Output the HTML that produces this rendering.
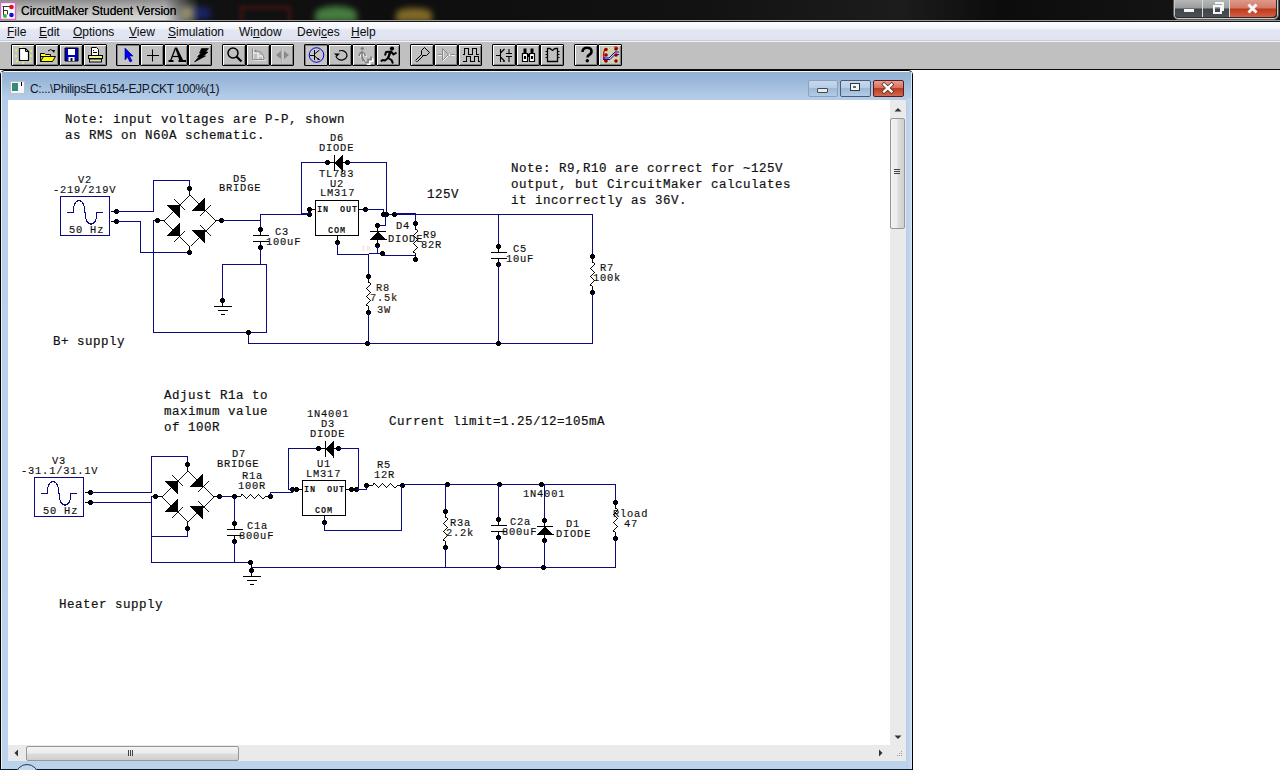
<!DOCTYPE html>
<html><head><meta charset="utf-8">
<style>
html,body{margin:0;padding:0;}
body{width:1280px;height:770px;overflow:hidden;position:relative;background:#fff;font-family:"Liberation Sans",sans-serif;}
.a{position:absolute;}
#title{left:0;top:0;width:1280px;height:20px;background:linear-gradient(90deg,#151515 0,#0e0e0e 400px,#121212 700px,#1c1c1c 900px,#0c0c0c 1000px,#181818 1280px);}
#title .t{left:21px;top:4px;font-size:12px;color:#000;white-space:nowrap;text-shadow:0 0 0.4px rgba(0,0,0,.7);}
#menu{left:0;top:22px;width:1280px;height:18px;background:linear-gradient(180deg,#fbfcfe 0px,#f3f5fb 6px,#e3e7f3 8px,#dfe3f1 18px);}
#menu span{position:absolute;top:3px;font-size:12px;color:#0c0c0c;white-space:nowrap;}
#menu u{text-decoration:underline;text-underline-offset:1px;text-decoration-thickness:1px;}
#toolbar{left:0;top:42px;width:1280px;height:28px;background:#c0c0c0;}
.btn{position:absolute;top:44px;width:24px;height:22px;box-sizing:border-box;border:1px solid #000;border-radius:1px;background:#c0c0c0;box-shadow:inset 1px 1px 0 #fff,inset -1px -1px 0 #808080;}
.btn.p{background:#c6c6c6;box-shadow:inset 1px 1px 0 #808080;}
.btn svg{position:absolute;left:1px;top:0px;}
</style></head><body>
<div id="title" class="a"><div class="a" style="left:0;top:0;width:205px;height:20px;background:linear-gradient(180deg,#8c8c8c 0,#b4b4b4 8px,#cfcfcf 16px,#d8d8d8 20px);-webkit-mask-image:linear-gradient(90deg,#000 0,#000 165px,transparent 200px);"></div><svg class="a" style="left:0;top:2px" width="17" height="18" viewBox="0 0 17 18"><rect x="0.5" y="0.5" width="15" height="17" fill="#fff" stroke="#d070c8" stroke-width="1.5"/><path d="M2.5 4.5h8M3.5 4.5v10M3.5 8.5h4v4" fill="none" stroke="#333" stroke-width="1"/><circle cx="11.5" cy="5" r="2.3" fill="#e01010"/><circle cx="11.5" cy="13" r="2.3" fill="#1010d0"/><circle cx="5" cy="14" r="2" fill="#30c030"/></svg>
<div class="a" style="left:182px;top:7px;width:14px;height:12px;background:#c8c080;filter:blur(3px);opacity:.55"></div>
<div class="a" style="left:194px;top:7px;width:16px;height:12px;background:#2030a0;filter:blur(3px);opacity:.6"></div>
<div class="a" style="left:240px;top:6px;width:45px;height:14px;border:3px solid #6a1a14;filter:blur(2px);opacity:.6"></div>
<div class="a" style="left:315px;top:6px;width:42px;height:16px;background:#58a050;border-radius:50% 50% 0 0;filter:blur(3px);opacity:.75"></div>
<div class="a" style="left:396px;top:8px;width:36px;height:14px;background:#b09030;border-radius:40% 40% 0 0;filter:blur(3px);opacity:.7"></div>
<div class="t a">CircuitMaker Student Version</div></div>
<div class="a" style="left:1173px;top:-3px;width:104px;height:21px;border:1px solid #5a5a5a;border-radius:0 0 5px 5px;background:#2a2a2a;box-shadow:inset 0 0 0 1px #c8c8c8;"></div>
<div class="a" style="left:1175px;top:0;width:27px;height:17px;background:linear-gradient(180deg,#b8b8b8 0,#9a9a9a 8px,#404548 9px,#4a5054 17px);border-radius:0 0 0 4px;"></div>
<div class="a" style="left:1203px;top:0;width:26px;height:17px;background:linear-gradient(180deg,#b4b8b8 0,#9aa0a0 8px,#404548 9px,#4a5054 17px);"></div>
<div class="a" style="left:1230px;top:0;width:46px;height:17px;background:linear-gradient(180deg,#e09888 0,#d07a68 8px,#c03818 9px,#d06048 17px);border-radius:0 0 4px 0;"></div>
<div class="a" style="left:1202px;top:0;width:1px;height:17px;background:#d8d8d8"></div>
<div class="a" style="left:1229px;top:0;width:1px;height:17px;background:#d8d8d8"></div>
<div class="a" style="left:1184px;top:9px;width:10px;height:3px;background:#f4f4f4;"></div>
<div class="a" style="left:1213px;top:5px;width:5px;height:5px;border:2px solid #f4f4f4;"></div>
<div class="a" style="left:1215px;top:2px;width:7px;height:7px;border-top:2px solid #f4f4f4;border-right:2px solid #f4f4f4;"></div>
<svg class="a" style="left:1245px;top:2px" width="16" height="13" viewBox="0 0 16 13"><path d="M3.5 2.5 L11.5 10.5 M11.5 2.5 L3.5 10.5" stroke="#f6f6f6" stroke-width="3" stroke-linecap="butt"/></svg>
<div class="a" style="left:0;top:20px;width:1280px;height:1px;background:#9a9a9a"></div>
<div class="a" style="left:0;top:21px;width:1280px;height:1px;background:#151515"></div>
<div id="menu" class="a">
<span style="left:7px"><u>F</u>ile</span>
<span style="left:39px"><u>E</u>dit</span>
<span style="left:73px"><u>O</u>ptions</span>
<span style="left:129px"><u>V</u>iew</span>
<span style="left:168px"><u>S</u>imulation</span>
<span style="left:239px">Wi<u>n</u>dow</span>
<span style="left:297px">Devi<u>c</u>es</span>
<span style="left:351px"><u>H</u>elp</span>
</div>
<div class="a" style="left:0;top:40px;width:1280px;height:1px;background:#c9ccd6"></div>
<div class="a" style="left:0;top:41px;width:1280px;height:1px;background:#f4f4f4"></div>
<div id="toolbar" class="a"></div>
<div class="a" style="left:0;top:69px;width:1280px;height:1px;background:#0a0a0a"></div>
<div class="btn" style="left:11px"><svg width="21" height="20" viewBox="0 0 21 20">
<g fill="#e8f070" opacity="0.8"><circle cx="3" cy="5" r="1.2"/><circle cx="3" cy="11" r="1.2"/><circle cx="4" cy="16" r="1.2"/><circle cx="18" cy="6" r="1.2"/><circle cx="18" cy="11" r="1.2"/><circle cx="17" cy="16" r="1.2"/><circle cx="10" cy="18" r="1.2"/><circle cx="8" cy="2" r="1.2"/></g>
<path d="M6.5 3.5h6l3 3v9h-9z" fill="#fff" stroke="#000" stroke-width="1.2"/><path d="M12.5 3.5v3h3" fill="none" stroke="#000"/></svg></div>
<div class="btn" style="left:35px"><svg width="21" height="20" viewBox="0 0 21 20">
<path d="M11 6 q3-3 5 0" fill="none" stroke="#000" stroke-width="1"/><path d="M15 5l3 0-1 3z" fill="#000"/>
<path d="M3.5 8.5h4l1 1h5v2h-10z" fill="#ffff40" stroke="#000"/><path d="M3.5 16.5l3-5h12l-3 5z" fill="#ffff00" stroke="#000"/><path d="M3.5 8.5v8" stroke="#000"/></svg></div>
<div class="btn" style="left:59px"><svg width="21" height="20" viewBox="0 0 21 20">
<path d="M4 3h13v13H4z" fill="#0000c0" stroke="#000" stroke-width="1"/><rect x="7" y="4" width="7" height="6" fill="#fff"/><rect x="7.5" y="12" width="6" height="4" fill="#fff"/><rect x="9.5" y="13" width="2" height="3" fill="#000"/></svg></div>
<div class="btn" style="left:83px"><svg width="21" height="20" viewBox="0 0 21 20">
<path d="M6.5 2.5h5l2 2v6h-7z" fill="#fff" stroke="#000"/><rect x="8" y="5" width="1" height="1" fill="#000"/><rect x="8" y="7" width="4" height="1" fill="#000"/>
<rect x="3.5" y="10.5" width="14" height="3" fill="#f0f090" stroke="#000"/><rect x="4.5" y="14" width="12" height="3" fill="#e0e0c0" stroke="#000"/></svg></div>

<div class="btn p" style="left:116px"><svg width="21" height="20" viewBox="0 0 21 20"><path d="M7 3l8 8h-3.5l2.5 5-2 1-2.5-5-2.5 3z" fill="#0000ff" stroke="#000080" stroke-width="0.6"/></svg></div>
<div class="btn" style="left:140px"><svg width="21" height="20" viewBox="0 0 21 20"><path d="M5 10.5h12M10.5 4.5v12" stroke="#000" stroke-width="1"/></svg></div>
<div class="btn" style="left:164px"><svg width="22" height="20" viewBox="0 0 22 20"><path d="M4.5 16 L9.5 3" stroke="#000" stroke-width="1.3" fill="none"/><path d="M9 2.5 L11 2.5 L17.5 16 L13.5 16z" fill="#000"/><path d="M7 11.5 H14" stroke="#000" stroke-width="1.2"/><rect x="2.5" y="15" width="5" height="2" fill="#000"/><rect x="12.5" y="15" width="7.5" height="2" fill="#000"/></svg></div>
<div class="btn" style="left:188px"><svg width="22" height="20" viewBox="0 0 22 20"><path d="M11.5 3.5 L18.5 3.5 L15.5 7 L18 7 L13.5 11 L15.5 11 L4.5 17 L9 11.5 L7.5 11.5 L11 8 L9.5 8z" fill="#000" stroke="#000" stroke-width="0.6"/></svg></div>

<div class="btn" style="left:222px"><svg width="21" height="20" viewBox="0 0 21 20"><circle cx="9" cy="8" r="5" fill="none" stroke="#000" stroke-width="1.5"/><path d="M12.5 11.5l5 5" stroke="#000" stroke-width="2.2"/></svg></div>
<div class="btn" style="left:246px"><svg width="21" height="20" viewBox="0 0 21 20"><path d="M5 4v11h13M5 8h5v7M10 11h5v4" fill="none" stroke="#fff" stroke-width="1"/><path d="M4.5 3.5v11h12M9 6q6 0 7 8" fill="none" stroke="#8a8a8a" stroke-width="1"/><path d="M8 4l-2 2.5 3 1z" fill="#8a8a8a"/></svg></div>
<div class="btn" style="left:270px"><svg width="21" height="20" viewBox="0 0 21 20"><path d="M9 6v8l-5-4z" fill="#8a8a8a"/><path d="M12 6v8l5-4z" fill="#8a8a8a"/><path d="M10.5 3v15" stroke="#fff" stroke-width="1"/><path d="M10 3v15" stroke="#8a8a8a" stroke-width="0.8"/></svg></div>

<div class="btn p" style="left:304px"><svg width="21" height="20" viewBox="0 0 21 20"><circle cx="10.5" cy="10" r="7.3" fill="none" stroke="#0000e0" stroke-width="1"/><path d="M4 10.5h5M8.5 5v10M8.5 9l5-4M8.5 11l5 4" fill="none" stroke="#000" stroke-width="1"/><path d="M14 15l-3-0.5 1.5-1.5z" fill="#000"/></svg></div>
<div class="btn" style="left:328px"><svg width="21" height="20" viewBox="0 0 21 20"><path d="M9 6 a5.5 4.8 0 1 1 -3 5" fill="none" stroke="#000" stroke-width="1.2"/><path d="M4 8.5l6 0-3 3z" fill="#000"/></svg></div>
<div class="btn" style="left:352px"><svg width="22" height="20" viewBox="0 0 22 20"><g transform="translate(0.8,0.8)" fill="none" stroke="#fff" stroke-width="1.6"><path d="M8 6 L8 11 L9 16 M8 11 L10 15.5 L11 17 M8 6.5 L6 8.5 L5 11 M8 6.5 L10.5 8.5 L11.5 11"/><path d="M12 18.5 H15 V15.5 H18 V12.5"/></g><circle cx="8.3" cy="3.6" r="1.7" fill="#808080"/><g fill="none" stroke="#808080" stroke-width="1.6"><path d="M8 6 L8 11 L9 16 M8 11 L10 15.5 L11 17 M8 6.5 L6 8.5 L5 11 M8 6.5 L10.5 8.5 L11.5 11"/><path d="M11 17.5 H14 V14.5 H17 V11.5"/></g></svg></div>
<div class="btn" style="left:376px"><svg width="22" height="20" viewBox="0 0 22 20"><circle cx="14" cy="3.6" r="2.1" fill="#000"/><path d="M12.5 6.5 L10 13 M7 10.5 L8 7 L13 6.5 L15.5 9.5 L18.5 7.5 M10 13 L7 15.5 L4.5 15 L3 16.5 M10 13 L13.5 15 L15 18.5" fill="none" stroke="#000" stroke-width="2" stroke-linejoin="round"/><path d="M11 7 L13.5 7 L11.5 12.5 L9.5 12z" fill="#000"/></svg></div>

<div class="btn" style="left:410px"><svg width="21" height="20" viewBox="0 0 21 20"><path d="M12.5 2.5l5 5-3 3h-4l-1-1v-4z" fill="none" stroke="#000" stroke-width="1"/><path d="M9.5 9.5l-6 6 1.5 1.5 6-6" fill="none" stroke="#000" stroke-width="1"/><path d="M4 15.5l1 1" stroke="#fff"/></svg></div>
<div class="btn" style="left:434px"><svg width="21" height="20" viewBox="0 0 21 20"><path d="M2 9.5h5M14 9.5h5" stroke="#8a8a8a" stroke-width="1.2"/><path d="M2 10.5h5M14 10.5h5" stroke="#fff" stroke-width="0.8"/><path d="M7 4l6 6-6 6z" fill="none" stroke="#fff" stroke-width="1"/><path d="M6.5 3.5l6 6-6 6z" fill="none" stroke="#8a8a8a" stroke-width="1"/><circle cx="13.5" cy="10" r="1.3" fill="#fff" stroke="#8a8a8a" stroke-width="0.6"/></svg></div>
<div class="btn" style="left:458px"><svg width="21" height="20" viewBox="0 0 21 20"><path d="M2.5 9.5h2v-6h4v6h4v-6h4v6h2" fill="none" stroke="#000" stroke-width="1" shape-rendering="crispEdges"/><path d="M2.5 16.5h4v-5h4v5h4v-5h4v5h1" fill="none" stroke="#000" stroke-width="1" shape-rendering="crispEdges"/></svg></div>

<div class="btn" style="left:492px"><svg width="21" height="20" viewBox="0 0 21 20"><path d="M2 10.5h4M6.5 4v13M6.5 8l4-4M6.5 12l4 4" fill="none" stroke="#000" stroke-width="1.1"/><path d="M11 17l-2.5-.5 1.5-1.5z" fill="#000"/><path d="M12 8.5h6M12 11.5h6M15 4v4M15 12v5" stroke="#000" stroke-width="1.1"/></svg></div>
<div class="btn" style="left:516px"><svg width="21" height="20" viewBox="0 0 21 20"><path d="M4.5 8.5h5v8h-5zM11.5 8.5h5v8h-5z" fill="#fff" stroke="#000" stroke-width="1.2"/><path d="M5.5 3.5h3v5h-3zM12.5 3.5h3v5h-3z" fill="#000"/><rect x="9" y="9" width="3" height="3" fill="#000"/><rect x="6" y="11" width="2" height="3" fill="#000"/><rect x="13" y="11" width="2" height="3" fill="#000"/></svg></div>
<div class="btn" style="left:540px"><svg width="21" height="20" viewBox="0 0 21 20"><path d="M5.5 3.5h2.5l2.5 2 2.5-2h2.5v13h-10z" fill="none" stroke="#000" stroke-width="1.3"/><g fill="#000"><rect x="3.5" y="6" width="2" height="1"/><rect x="3.5" y="9" width="2" height="1"/><rect x="3.5" y="12" width="2" height="1"/><rect x="15.5" y="6" width="2" height="1"/><rect x="15.5" y="9" width="2" height="1"/><rect x="15.5" y="12" width="2" height="1"/></g></svg></div>

<div class="btn" style="left:574px"><svg width="21" height="20" viewBox="0 0 21 20"><path d="M6.5 7 Q6.5 2.8 11 2.8 Q15.5 2.8 15.5 6.5 Q15.5 8.8 13 10 Q11.5 10.8 11.5 12.5" fill="none" stroke="#000" stroke-width="2.6"/><circle cx="11.3" cy="15.8" r="1.7" fill="#000"/></svg></div>
<div class="btn" style="left:598px"><svg width="21" height="20" viewBox="0 0 21 20"><rect x="2" y="2" width="17" height="16" fill="#e8e890" opacity="0.5"/><path d="M5 16q-3-6 0-12" fill="none" stroke="#e00000" stroke-width="1.3"/><path d="M3 13h6l6-6h4M3 14.5h7l5-5h4" fill="none" stroke="#0000e0" stroke-width="1"/><g fill="#900000"><circle cx="6" cy="4.5" r="1.8"/><circle cx="6" cy="10" r="1.8"/><circle cx="6" cy="16" r="1.8"/><circle cx="16" cy="4" r="1.8"/><circle cx="16" cy="10" r="1.8"/><circle cx="16" cy="16" r="1.8"/></g><path d="M14 2h3l1 2" fill="none" stroke="#e00000" stroke-width="1"/></svg></div>

<div class="a" style="left:0;top:70px;width:913px;height:700px;background:#000;border-radius:5px 5px 0 0;"></div>
<div class="a" style="left:1px;top:71px;width:911px;height:698px;background:linear-gradient(180deg,#f4f8fc 0px,#f4f8fc 1px,#93b2d3 1px,#9cb8d8 10px,#b2cce8 26px,#b8d0ea 60px,#bcd3ec 100%);border-radius:4px 4px 0 0;"></div>
<div class="a" style="left:1px;top:72px;width:1px;height:697px;background:#e8f0f8"></div>
<div class="a" style="left:911px;top:72px;width:1px;height:697px;background:#d8e6f4"></div>
<div class="a" style="left:906px;top:98px;width:5px;height:671px;background:linear-gradient(90deg,#b8cfe8,#c4d9ee)"></div>
<!-- icon -->
<div class="a" style="left:10px;top:81px;width:13px;height:11px;background:#f4f6f8;border:1px solid #b8c0c8;"></div>
<div class="a" style="left:12px;top:83px;width:6px;height:8px;background:#3a8a7a;"></div>
<div class="a" style="left:21px;top:82px;width:1px;height:4px;background:#000;"></div>
<div class="a" style="left:30px;top:82px;font-size:12px;letter-spacing:-0.38px;color:#10182a;white-space:nowrap;">C:...\PhilipsEL6154-EJP.CKT 100%(1)</div>
<!-- buttons -->
<div class="a" style="left:808px;top:80px;width:28px;height:15px;border:1px solid #8aa2c0;border-radius:2px;background:linear-gradient(180deg,#c6d8ec 0%,#b8cde6 45%,#9fb9d6 50%,#b4cbe4 100%);"></div>
<div class="a" style="left:817px;top:88px;width:9px;height:3px;border:1px solid #404850;background:#e8ecf0;border-radius:1px"></div>
<div class="a" style="left:840px;top:80px;width:29px;height:15px;border:1px solid #4a5a70;border-radius:2px;background:linear-gradient(180deg,#c6d8ec 0%,#b8cde6 45%,#9fb9d6 50%,#b4cbe4 100%);"></div>
<div class="a" style="left:850px;top:83px;width:8px;height:6px;border:1.5px solid #303840;background:#f4f6f8;"></div>
<div class="a" style="left:853px;top:86px;width:3px;height:2px;background:#606870;"></div>
<div class="a" style="left:873px;top:80px;width:29px;height:15px;border:1px solid #5a1a1a;border-radius:2px;background:linear-gradient(180deg,#e8a090 0%,#d87060 45%,#c03a20 50%,#d06a50 100%);"></div>
<svg class="a" style="left:880px;top:82px" width="16" height="12" viewBox="0 0 16 12"><path d="M4 2.5 L11.5 9.5 M11.5 2.5 L4 9.5" stroke="#4a2020" stroke-width="3.8" stroke-linecap="square"/><path d="M4 2.5 L11.5 9.5 M11.5 2.5 L4 9.5" stroke="#fff" stroke-width="2.4" stroke-linecap="square"/></svg>
<!-- client -->
<div class="a" style="left:8px;top:100px;width:882px;height:645px;background:#fff;overflow:hidden;">
<svg width="882" height="645" style="position:absolute;left:0;top:0">
<style>
.n{font-family:"Liberation Mono",monospace;font-size:12.5px;letter-spacing:0.5px;fill:#111;stroke:#111;stroke-width:0.2px;}
.l{font-family:"Liberation Mono",monospace;font-size:10.4px;font-weight:normal;letter-spacing:0.8px;stroke:currentColor;stroke-width:0.15px;}
.s{font-family:"Liberation Mono",monospace;font-size:8.5px;font-weight:bold;letter-spacing:0.9px;fill:#141414;}
</style>
<g transform="translate(-8,-100)" shape-rendering="crispEdges">
<text class="n" x="65" y="122.5">Note: input voltages are P-P, shown</text>
<text class="n" x="65" y="138.5">as RMS on N60A schematic.</text>
<text class="n" x="511" y="171.5">Note: R9,R10 are correct for ~125V</text>
<text class="n" x="511" y="187.5">output, but CircuitMaker calculates</text>
<text class="n" x="511" y="203.5">it incorrectly as 36V.</text>
<text class="n" x="427" y="197.5">125V</text>
<text class="n" x="53" y="344.5">B+ supply</text>
<rect x="60.5" y="196.5" width="49" height="39" stroke="#0c0a80" fill="none"/>
<path d="M67 212.5 H73 C73 196.5 85 196.5 85 212.5 C85 228 97 228 97 212.5 H102.5" stroke="#0c0a80" fill="none" stroke-width="1.1"/>
<text class="l" x="78" y="183" fill="#141414" stroke="#141414">V2</text>
<text class="l" x="53" y="193" fill="#141414" stroke="#141414">-219/219V</text>
<text class="l" x="69" y="233" fill="#141414" stroke="#141414">50 Hz</text>
<path d="M110.5 211.5 L116.5 211.5" stroke="#000" fill="none"/>
<path d="M110.5 221.5 L116.5 221.5" stroke="#000" fill="none"/>
<circle cx="116.5" cy="211.5" r="2.6" fill="#000"/>
<circle cx="116.5" cy="221.5" r="2.6" fill="#000"/>
<path d="M116.5 211.5 L153.5 211.5 L153.5 180.5 L189.5 180.5 L189.5 188.5" stroke="#0c0a80" fill="none"/>
<path d="M116.5 221.5 L140.5 221.5 L140.5 252.5 L189.5 252.5" stroke="#0c0a80" fill="none"/>
<path d="M157.5 220.5 L153.5 220.5 L153.5 332.5 L266.5 332.5 L266.5 264.5 L222.5 264.5 L222.5 300.5" stroke="#0c0a80" fill="none"/>
<path d="M189.5 195 L215 220.5 L189.5 246 L164 220.5 z" stroke="#000" fill="none" stroke-width="0.72"/>
<path d="M189.5 195 L215 220.5 L189.5 246 L164 220.5 z" stroke="#000" fill="none" stroke-width="0.72"/>
<path d="M189.5 188.5 V195 M189.5 252.5 V246 M157.5 220.5 H164 M221.5 220.5 H215" stroke="#000" fill="none"/>
<path d="M179.578 204.922 L179.578 217.649 L166.851 204.922 z" fill="#000"/>
<path d="M185.094 210.437 L174.063 199.406" stroke="#000" stroke-width="0.72"/>
<path d="M185.094 210.437 L174.063 199.406" stroke="#000" stroke-width="0.72"/>
<path d="M205.078 210.578 L192.351 210.578 L205.078 197.851 z" fill="#000"/>
<path d="M199.563 216.094 L210.594 205.063" stroke="#000" stroke-width="0.72"/>
<path d="M199.563 216.094 L210.594 205.063" stroke="#000" stroke-width="0.72"/>
<path d="M179.578 236.078 L166.851 236.078 L179.578 223.351 z" fill="#000"/>
<path d="M174.063 241.594 L185.094 230.563" stroke="#000" stroke-width="0.72"/>
<path d="M174.063 241.594 L185.094 230.563" stroke="#000" stroke-width="0.72"/>
<path d="M205.078 230.422 L205.078 243.149 L192.351 230.422 z" fill="#000"/>
<path d="M210.594 235.937 L199.563 224.906" stroke="#000" stroke-width="0.72"/>
<path d="M210.594 235.937 L199.563 224.906" stroke="#000" stroke-width="0.72"/>
<circle cx="189.5" cy="188.5" r="2.6" fill="#000"/>
<circle cx="189.5" cy="252.5" r="2.6" fill="#000"/>
<circle cx="157.5" cy="220.5" r="2.6" fill="#000"/>
<circle cx="221.5" cy="220.5" r="2.6" fill="#000"/>
<text class="l" x="233" y="182" fill="#141414" stroke="#141414">D5</text>
<text class="l" x="219" y="191" fill="#141414" stroke="#141414">BRIDGE</text>
<path d="M221.5 220.5 L260.5 220.5 L260.5 214.5 L301.5 214.5 L309.5 214.5" stroke="#0c0a80" fill="none"/>
<path d="M260.5 220.5 L260.5 229.5" stroke="#0c0a80" fill="none"/>
<path d="M260.5 229.5 L260.5 235.5" stroke="#000" fill="none"/>
<path d="M260.5 241.5 L260.5 247.5" stroke="#000" fill="none"/>
<path d="M252.5 235.5 L268.5 235.5" stroke="#000" fill="none"/>
<path d="M252.5 241.5 L268.5 241.5" stroke="#000" fill="none"/>
<circle cx="260.5" cy="229.5" r="2.6" fill="#000"/>
<circle cx="260.5" cy="247.5" r="2.6" fill="#000"/>
<path d="M260.5 247.5 L260.5 264.5" stroke="#0c0a80" fill="none"/>
<text class="l" x="275" y="235" fill="#141414" stroke="#141414">C3</text>
<text class="l" x="266" y="245" fill="#141414" stroke="#141414">100uF</text>
<circle cx="222.5" cy="300.5" r="2.6" fill="#000"/>
<path d="M222.5 300.5 L222.5 306.5" stroke="#000" fill="none"/>
<path d="M213.5 306.5 L231.5 306.5" stroke="#000" fill="none"/>
<path d="M217.5 310.5 L227.5 310.5" stroke="#000" fill="none"/>
<path d="M220.5 314.5 L224.5 314.5" stroke="#000" fill="none"/>
<path d="M248.5 332.5 L248.5 343.5 L592.5 343.5" stroke="#0c0a80" fill="none"/>
<circle cx="248.5" cy="332.5" r="2.6" fill="#000"/>
<rect x="315.5" y="200.5" width="43" height="35" stroke="#000" fill="none"/>
<text class="s" x="317" y="212">IN</text>
<text class="s" x="340" y="212">OUT</text>
<text class="s" x="328" y="233">COM</text>
<text class="s" x="361" y="251" style="fill:#f0c0b0;opacity:.45;font-size:7.5px">IN</text>
<path d="M309.5 209.5 L315.5 209.5" stroke="#000" fill="none"/>
<circle cx="309.5" cy="209.5" r="2.6" fill="#000"/>
<circle cx="309.5" cy="214.5" r="2.6" fill="#000"/>
<path d="M358.5 209.5 L365.5 209.5" stroke="#000" fill="none"/>
<circle cx="365.5" cy="209.5" r="2.6" fill="#000"/>
<path d="M337.5 235.5 L337.5 242.5" stroke="#000" fill="none"/>
<circle cx="337.5" cy="242.5" r="2.6" fill="#000"/>
<text class="l" x="319" y="177" fill="#141414" stroke="#141414">TL783</text>
<text class="l" x="330" y="187" fill="#141414" stroke="#141414">U2</text>
<text class="l" x="320" y="196" fill="#141414" stroke="#141414">LM317</text>
<path d="M301.5 214.5 L301.5 162.5 L327.5 162.5" stroke="#0c0a80" fill="none"/>
<path d="M327.5 162.5 L347.5 162.5" stroke="#000" fill="none"/>
<path d="M334.5 154.5 L334.5 170.5" stroke="#000" fill="none"/>
<path d="M334.5 162.5 L342.5 154.5 L342.5 171.5 z" fill="#000"/>
<circle cx="327.5" cy="162.5" r="2.6" fill="#000"/>
<circle cx="347.5" cy="162.5" r="2.6" fill="#000"/>
<text class="l" x="330" y="141" fill="#141414" stroke="#141414">D6</text>
<text class="l" x="319" y="151" fill="#141414" stroke="#141414">DIODE</text>
<path d="M347.5 162.5 L386.5 162.5 L386.5 214.5" stroke="#0c0a80" fill="none"/>
<path d="M365.5 209.5 L383.5 209.5 L383.5 214.5" stroke="#0c0a80" fill="none"/>
<path d="M383.5 214.5 L592.5 214.5 L592.5 256.5" stroke="#0c0a80" fill="none"/>
<circle cx="383.5" cy="214.5" r="2.6" fill="#000"/>
<circle cx="386.5" cy="214.5" r="2.6" fill="#000"/>
<circle cx="394.5" cy="214.5" r="2.6" fill="#000"/>
<path d="M385.5 214.5 L385.5 225.5 L377.5 225.5" stroke="#0c0a80" fill="none"/>
<path d="M394.5 213.5 L415.5 213.5" stroke="#0c0a80" fill="none"/>
<path d="M301.5 213.5 L309.5 213.5" stroke="#0c0a80" fill="none"/>
<path d="M377.5 225.5 L377.5 245.5" stroke="#000" fill="none"/>
<path d="M369.5 231.5 L385.5 231.5" stroke="#000" fill="none"/>
<path d="M377.5 231.5 L369.5 239.5 L386.5 239.5 z" fill="#000"/>
<circle cx="377.5" cy="225.5" r="2.6" fill="#000"/>
<circle cx="377.5" cy="245.5" r="2.6" fill="#000"/>
<text class="l" x="396" y="229" fill="#141414" stroke="#141414">D4</text>
<text class="l" x="388" y="242" fill="#141414" stroke="#141414">DIODE</text>
<path d="M377.5 245.5 L377.5 253.5" stroke="#0c0a80" fill="none"/>
<path d="M337.5 242.5 L337.5 254.5 L368.5 254.5" stroke="#0c0a80" fill="none"/>
<path d="M368.5 253.5 L382.5 253.5" stroke="#0c0a80" fill="none"/>
<path d="M382.5 255.5 L415.5 255.5 L415.5 259.5" stroke="#0c0a80" fill="none"/>
<circle cx="382.5" cy="253.5" r="2.6" fill="#000"/>
<path d="M415.5 214.5 L415.5 223.5" stroke="#0c0a80" fill="none"/>
<circle cx="415.5" cy="223.5" r="2.6" fill="#000"/>
<circle cx="415.5" cy="259.5" r="2.6" fill="#000"/>
<path d="M415.5 223.5 L415.5 229.5 L417.9 231.2 L413.1 235.5 L417.9 239.5 L413.1 243.5 L417.9 247.5 L413.1 251.8 L415.5 253.5 L415.5 259.5" stroke="#000" fill="none" stroke-width="0.8"/>
<path d="M415.5 223.5 L415.5 229.5 L417.9 231.2 L413.1 235.5 L417.9 239.5 L413.1 243.5 L417.9 247.5 L413.1 251.8 L415.5 253.5 L415.5 259.5" stroke="#000" fill="none" stroke-width="0.8"/>
<text class="l" x="423" y="238" fill="#141414" stroke="#141414">R9</text>
<text class="l" x="421" y="248" fill="#141414" stroke="#141414">82R</text>
<path d="M368.5 253.5 L368.5 276.5" stroke="#0c0a80" fill="none"/>
<circle cx="368.5" cy="276.5" r="2.6" fill="#000"/>
<circle cx="368.5" cy="312.5" r="2.6" fill="#000"/>
<path d="M368.5 276.5 L368.5 282.5 L370.9 284.2 L366.1 288.5 L370.9 292.5 L366.1 296.5 L370.9 300.5 L366.1 304.8 L368.5 306.5 L368.5 312.5" stroke="#000" fill="none" stroke-width="0.8"/>
<path d="M368.5 276.5 L368.5 282.5 L370.9 284.2 L366.1 288.5 L370.9 292.5 L366.1 296.5 L370.9 300.5 L366.1 304.8 L368.5 306.5 L368.5 312.5" stroke="#000" fill="none" stroke-width="0.8"/>
<path d="M368.5 312.5 L368.5 343.5" stroke="#0c0a80" fill="none"/>
<circle cx="367.5" cy="343.5" r="2.6" fill="#000"/>
<text class="l" x="376" y="291" fill="#3a1e10" stroke="#3a1e10">R8</text>
<text class="l" x="370" y="301" fill="#3a1e10" stroke="#3a1e10">7.5k</text>
<text class="l" x="377" y="313" fill="#3a1e10" stroke="#3a1e10">3W</text>
<path d="M498.5 214.5 L498.5 246.5" stroke="#0c0a80" fill="none"/>
<path d="M498.5 246.5 L498.5 252.5" stroke="#000" fill="none"/>
<path d="M498.5 258.5 L498.5 264.5" stroke="#000" fill="none"/>
<path d="M490.5 252.5 L506.5 252.5" stroke="#000" fill="none"/>
<path d="M490.5 258.5 L506.5 258.5" stroke="#000" fill="none"/>
<circle cx="498.5" cy="246.5" r="2.6" fill="#000"/>
<circle cx="498.5" cy="264.5" r="2.6" fill="#000"/>
<path d="M498.5 264.5 L498.5 343.5" stroke="#0c0a80" fill="none"/>
<circle cx="498.5" cy="343.5" r="2.6" fill="#000"/>
<text class="l" x="513" y="252" fill="#141414" stroke="#141414">C5</text>
<text class="l" x="506" y="262" fill="#141414" stroke="#141414">10uF</text>
<circle cx="592.5" cy="256.5" r="2.6" fill="#000"/>
<circle cx="592.5" cy="292.5" r="2.6" fill="#000"/>
<path d="M592.5 256.5 L592.5 262.5 L594.9 264.2 L590.1 268.5 L594.9 272.5 L590.1 276.5 L594.9 280.5 L590.1 284.8 L592.5 286.5 L592.5 292.5" stroke="#000" fill="none" stroke-width="0.8"/>
<path d="M592.5 256.5 L592.5 262.5 L594.9 264.2 L590.1 268.5 L594.9 272.5 L590.1 276.5 L594.9 280.5 L590.1 284.8 L592.5 286.5 L592.5 292.5" stroke="#000" fill="none" stroke-width="0.8"/>
<path d="M592.5 292.5 L592.5 343.5" stroke="#0c0a80" fill="none"/>
<text class="l" x="600" y="271" fill="#141414" stroke="#141414">R7</text>
<text class="l" x="593" y="281" fill="#141414" stroke="#141414">100k</text>
<text class="n" x="164" y="398.5">Adjust R1a to</text>
<text class="n" x="164" y="414.5">maximum value</text>
<text class="n" x="164" y="430.5">of 100R</text>
<text class="n" x="389" y="424.5">Current limit=1.25/12=105mA</text>
<text class="n" x="59" y="607.5">Heater supply</text>
<rect x="34.5" y="477.5" width="49" height="39" stroke="#0c0a80" fill="none"/>
<path d="M41 493.5 H47 C47 477.5 59 477.5 59 493.5 C59 509 71 509 71 493.5 H76.5" stroke="#0c0a80" fill="none" stroke-width="1.1"/>
<text class="l" x="52" y="464" fill="#141414" stroke="#141414">V3</text>
<text class="l" x="21" y="474" fill="#141414" stroke="#141414">-31.1/31.1V</text>
<text class="l" x="43" y="514" fill="#141414" stroke="#141414">50 Hz</text>
<path d="M84.5 492.5 L90.5 492.5" stroke="#000" fill="none"/>
<path d="M84.5 502.5 L90.5 502.5" stroke="#000" fill="none"/>
<circle cx="90.5" cy="492.5" r="2.6" fill="#000"/>
<circle cx="90.5" cy="502.5" r="2.6" fill="#000"/>
<path d="M90.5 492.5 L151.5 492.5 L151.5 456.5 L187.5 456.5 L187.5 464.5" stroke="#0c0a80" fill="none"/>
<path d="M90.5 502.5 L151.5 502.5" stroke="#0c0a80" fill="none"/>
<path d="M155.5 496.5 L151.5 496.5 L151.5 562.5 L250.5 562.5" stroke="#0c0a80" fill="none"/>
<path d="M187.5 528.5 L187.5 536.5 L151.5 536.5" stroke="#0c0a80" fill="none"/>
<path d="M187.5 471 L213 496.5 L187.5 522 L162 496.5 z" stroke="#000" fill="none" stroke-width="0.72"/>
<path d="M187.5 471 L213 496.5 L187.5 522 L162 496.5 z" stroke="#000" fill="none" stroke-width="0.72"/>
<path d="M187.5 464.5 V471 M187.5 528.5 V522 M155.5 496.5 H162 M219.5 496.5 H213" stroke="#000" fill="none"/>
<path d="M177.578 480.922 L177.578 493.649 L164.851 480.922 z" fill="#000"/>
<path d="M183.094 486.437 L172.063 475.406" stroke="#000" stroke-width="0.72"/>
<path d="M183.094 486.437 L172.063 475.406" stroke="#000" stroke-width="0.72"/>
<path d="M203.078 486.578 L190.351 486.578 L203.078 473.851 z" fill="#000"/>
<path d="M197.563 492.094 L208.594 481.063" stroke="#000" stroke-width="0.72"/>
<path d="M197.563 492.094 L208.594 481.063" stroke="#000" stroke-width="0.72"/>
<path d="M177.578 512.078 L164.851 512.078 L177.578 499.351 z" fill="#000"/>
<path d="M172.063 517.594 L183.094 506.563" stroke="#000" stroke-width="0.72"/>
<path d="M172.063 517.594 L183.094 506.563" stroke="#000" stroke-width="0.72"/>
<path d="M203.078 506.422 L203.078 519.149 L190.351 506.422 z" fill="#000"/>
<path d="M208.594 511.937 L197.563 500.906" stroke="#000" stroke-width="0.72"/>
<path d="M208.594 511.937 L197.563 500.906" stroke="#000" stroke-width="0.72"/>
<circle cx="187.5" cy="464.5" r="2.6" fill="#000"/>
<circle cx="187.5" cy="528.5" r="2.6" fill="#000"/>
<circle cx="155.5" cy="496.5" r="2.6" fill="#000"/>
<circle cx="219.5" cy="496.5" r="2.6" fill="#000"/>
<text class="l" x="232" y="457" fill="#141414" stroke="#141414">D7</text>
<text class="l" x="217" y="467" fill="#141414" stroke="#141414">BRIDGE</text>
<path d="M219.5 496.5 L234.5 496.5" stroke="#0c0a80" fill="none"/>
<circle cx="234.5" cy="496.5" r="2.6" fill="#000"/>
<circle cx="270.5" cy="496.5" r="2.6" fill="#000"/>
<path d="M234.5 496.5 L240.5 496.5 L242.2 494.1 L246.5 498.9 L250.5 494.1 L254.5 498.9 L258.5 494.1 L262.8 498.9 L264.5 496.5 L270.5 496.5" stroke="#000" fill="none" stroke-width="0.8"/>
<path d="M234.5 496.5 L240.5 496.5 L242.2 494.1 L246.5 498.9 L250.5 494.1 L254.5 498.9 L258.5 494.1 L262.8 498.9 L264.5 496.5 L270.5 496.5" stroke="#000" fill="none" stroke-width="0.8"/>
<text class="l" x="242" y="479" fill="#141414" stroke="#141414">R1a</text>
<text class="l" x="238" y="489" fill="#141414" stroke="#141414">100R</text>
<path d="M270.5 496.5 L270.5 492.5 L292.5 492.5" stroke="#0c0a80" fill="none"/>
<path d="M234.5 496.5 L234.5 523.5" stroke="#0c0a80" fill="none"/>
<path d="M234.5 523.5 L234.5 529.5" stroke="#000" fill="none"/>
<path d="M234.5 535.5 L234.5 541.5" stroke="#000" fill="none"/>
<path d="M226.5 529.5 L242.5 529.5" stroke="#000" fill="none"/>
<path d="M226.5 535.5 L242.5 535.5" stroke="#000" fill="none"/>
<circle cx="234.5" cy="523.5" r="2.6" fill="#000"/>
<circle cx="234.5" cy="541.5" r="2.6" fill="#000"/>
<path d="M234.5 541.5 L234.5 562.5" stroke="#0c0a80" fill="none"/>
<text class="l" x="247" y="529" fill="#141414" stroke="#141414">C1a</text>
<text class="l" x="239" y="539" fill="#141414" stroke="#141414">800uF</text>
<circle cx="250.5" cy="562.5" r="2.6" fill="#000"/>
<path d="M250.5 562.5 L251.5 562.5" stroke="#0c0a80" fill="none"/>
<path d="M251.5 562.5 L251.5 576.5" stroke="#000" fill="none"/>
<circle cx="251.5" cy="570.5" r="2.6" fill="#000"/>
<path d="M242.5 576.5 L260.5 576.5" stroke="#000" fill="none"/>
<path d="M246.5 580.5 L256.5 580.5" stroke="#000" fill="none"/>
<path d="M249.5 584.5 L253.5 584.5" stroke="#000" fill="none"/>
<path d="M251.5 567.5 L615.5 567.5" stroke="#0c0a80" fill="none"/>
<rect x="302.5" y="480.5" width="43" height="35" stroke="#000" fill="none"/>
<text class="s" x="304" y="492">IN</text>
<text class="s" x="327" y="492">OUT</text>
<text class="s" x="315" y="513">COM</text>
<path d="M296.5 489.5 L302.5 489.5" stroke="#000" fill="none"/>
<circle cx="292.5" cy="489.5" r="2.6" fill="#000"/>
<circle cx="296.5" cy="489.5" r="2.6" fill="#000"/>
<path d="M345.5 489.5 L351.5 489.5" stroke="#000" fill="none"/>
<circle cx="351.5" cy="489.5" r="2.6" fill="#000"/>
<circle cx="356.5" cy="489.5" r="2.6" fill="#000"/>
<path d="M324.5 515.5 L324.5 522.5" stroke="#000" fill="none"/>
<circle cx="324.5" cy="522.5" r="2.6" fill="#000"/>
<text class="l" x="317" y="467" fill="#141414" stroke="#141414">U1</text>
<text class="l" x="306" y="477" fill="#141414" stroke="#141414">LM317</text>
<path d="M292.5 489.5 L288.5 489.5 L288.5 448.5 L318.5 448.5" stroke="#0c0a80" fill="none"/>
<path d="M318.5 448.5 L338.5 448.5" stroke="#000" fill="none"/>
<path d="M325.5 440.5 L325.5 456.5" stroke="#000" fill="none"/>
<path d="M325.5 448.5 L333.5 440.5 L333.5 457.5 z" fill="#000"/>
<circle cx="318.5" cy="448.5" r="2.6" fill="#000"/>
<circle cx="338.5" cy="448.5" r="2.6" fill="#000"/>
<path d="M338.5 448.5 L358.5 448.5 L358.5 489.5 L356.5 489.5" stroke="#0c0a80" fill="none"/>
<text class="l" x="307" y="417" fill="#141414" stroke="#141414">1N4001</text>
<text class="l" x="321" y="427" fill="#141414" stroke="#141414">D3</text>
<text class="l" x="310" y="437" fill="#141414" stroke="#141414">DIODE</text>
<path d="M356.5 489.5 L366.5 489.5 L366.5 485.5" stroke="#0c0a80" fill="none"/>
<circle cx="366.5" cy="485.5" r="2.6" fill="#000"/>
<circle cx="402.5" cy="485.5" r="2.6" fill="#000"/>
<path d="M366.5 485.5 L372.5 485.5 L374.2 483.1 L378.5 487.9 L382.5 483.1 L386.5 487.9 L390.5 483.1 L394.8 487.9 L396.5 485.5 L402.5 485.5" stroke="#000" fill="none" stroke-width="0.8"/>
<path d="M366.5 485.5 L372.5 485.5 L374.2 483.1 L378.5 487.9 L382.5 483.1 L386.5 487.9 L390.5 483.1 L394.8 487.9 L396.5 485.5 L402.5 485.5" stroke="#000" fill="none" stroke-width="0.8"/>
<text class="l" x="377" y="468" fill="#141414" stroke="#141414">R5</text>
<text class="l" x="374" y="478" fill="#141414" stroke="#141414">12R</text>
<path d="M324.5 522.5 L324.5 530.5 L401.5 530.5 L401.5 485.5" stroke="#0c0a80" fill="none"/>
<path d="M402.5 484.5 L615.5 484.5 L615.5 502.5" stroke="#0c0a80" fill="none"/>
<circle cx="447.5" cy="484.5" r="2.6" fill="#000"/>
<circle cx="499.5" cy="484.5" r="2.6" fill="#000"/>
<circle cx="541.5" cy="484.5" r="2.6" fill="#000"/>
<path d="M445.5 484.5 L445.5 511.5" stroke="#0c0a80" fill="none"/>
<circle cx="445.5" cy="511.5" r="2.6" fill="#000"/>
<circle cx="445.5" cy="547.5" r="2.6" fill="#000"/>
<path d="M445.5 511.5 L445.5 517.5 L447.9 519.2 L443.1 523.5 L447.9 527.5 L443.1 531.5 L447.9 535.5 L443.1 539.8 L445.5 541.5 L445.5 547.5" stroke="#000" fill="none" stroke-width="0.8"/>
<path d="M445.5 511.5 L445.5 517.5 L447.9 519.2 L443.1 523.5 L447.9 527.5 L443.1 531.5 L447.9 535.5 L443.1 539.8 L445.5 541.5 L445.5 547.5" stroke="#000" fill="none" stroke-width="0.8"/>
<path d="M445.5 547.5 L445.5 567.5" stroke="#0c0a80" fill="none"/>
<text class="l" x="450" y="526" fill="#141414" stroke="#141414">R3a</text>
<text class="l" x="446" y="536" fill="#141414" stroke="#141414">2.2k</text>
<path d="M498.5 484.5 L498.5 519.5" stroke="#0c0a80" fill="none"/>
<path d="M498.5 519.5 L498.5 525.5" stroke="#000" fill="none"/>
<path d="M498.5 531.5 L498.5 537.5" stroke="#000" fill="none"/>
<path d="M490.5 525.5 L506.5 525.5" stroke="#000" fill="none"/>
<path d="M490.5 531.5 L506.5 531.5" stroke="#000" fill="none"/>
<circle cx="498.5" cy="519.5" r="2.6" fill="#000"/>
<circle cx="498.5" cy="537.5" r="2.6" fill="#000"/>
<path d="M498.5 537.5 L498.5 567.5" stroke="#0c0a80" fill="none"/>
<circle cx="498.5" cy="567.5" r="2.6" fill="#000"/>
<text class="l" x="510" y="525" fill="#141414" stroke="#141414">C2a</text>
<text class="l" x="502" y="535" fill="#141414" stroke="#141414">800uF</text>
<path d="M544.5 484.5 L544.5 520.5" stroke="#0c0a80" fill="none"/>
<path d="M544.5 520.5 L544.5 540.5" stroke="#000" fill="none"/>
<path d="M536.5 526.5 L552.5 526.5" stroke="#000" fill="none"/>
<path d="M544.5 526.5 L536.5 534.5 L553.5 534.5 z" fill="#000"/>
<circle cx="544.5" cy="520.5" r="2.6" fill="#000"/>
<circle cx="544.5" cy="540.5" r="2.6" fill="#000"/>
<path d="M544.5 540.5 L544.5 567.5" stroke="#0c0a80" fill="none"/>
<circle cx="543.5" cy="567.5" r="2.6" fill="#000"/>
<text class="l" x="523" y="497" fill="#141414" stroke="#141414">1N4001</text>
<text class="l" x="566" y="527" fill="#141414" stroke="#141414">D1</text>
<text class="l" x="556" y="537" fill="#141414" stroke="#141414">DIODE</text>
<circle cx="615.5" cy="502.5" r="2.6" fill="#000"/>
<circle cx="615.5" cy="538.5" r="2.6" fill="#000"/>
<path d="M615.5 502.5 L615.5 508.5 L617.9 510.2 L613.1 514.5 L617.9 518.5 L613.1 522.5 L617.9 526.5 L613.1 530.8 L615.5 532.5 L615.5 538.5" stroke="#000" fill="none" stroke-width="0.8"/>
<path d="M615.5 502.5 L615.5 508.5 L617.9 510.2 L613.1 514.5 L617.9 518.5 L613.1 522.5 L617.9 526.5 L613.1 530.8 L615.5 532.5 L615.5 538.5" stroke="#000" fill="none" stroke-width="0.8"/>
<path d="M615.5 538.5 L615.5 567.5" stroke="#0c0a80" fill="none"/>
<text class="l" x="613" y="517" fill="#141414" stroke="#141414">Rload</text>
<text class="l" x="624" y="527" fill="#141414" stroke="#141414">47</text>
</g></svg>
</div>
<!-- vscroll -->
<div class="a" style="left:890px;top:100px;width:16px;height:645px;background:#eaeaea;border-left:0;"></div>
<svg class="a" style="left:890px;top:103px" width="16" height="12"><path d="M4.5 8.5 L8 5 L11.5 8.5z" fill="#333"/></svg>
<div class="a" style="left:890px;top:118px;width:13px;height:109px;border:1px solid #979797;border-radius:2px;background:linear-gradient(90deg,#f2f2f2 0%,#ececec 45%,#dcdcdc 55%,#d0d0d0 100%);"></div>
<div class="a" style="left:894px;top:169px;width:6px;height:1px;background:#444;box-shadow:0 2px 0 #444,0 4px 0 #444"></div>
<svg class="a" style="left:890px;top:731px" width="16" height="12"><path d="M4.5 4.5 L11.5 4.5 L8 8z" fill="#333"/></svg>
<!-- hscroll -->
<div class="a" style="left:8px;top:745px;width:898px;height:16px;background:#eaeaea;"></div>
<svg class="a" style="left:10px;top:747px" width="12" height="12"><path d="M8 2.5 L4.5 6 L8 9.5z" fill="#333"/></svg>
<div class="a" style="left:26px;top:746px;width:211px;height:13px;border:1px solid #979797;border-radius:2px;background:linear-gradient(180deg,#f3f3f3 0%,#ececec 45%,#dcdcdc 55%,#cfcfcf 100%);"></div>
<div class="a" style="left:128px;top:750px;width:1px;height:6px;background:#444;box-shadow:2px 0 0 #444,4px 0 0 #444"></div>
<svg class="a" style="left:875px;top:747px" width="12" height="12"><path d="M4 2.5 L7.5 6 L4 9.5z" fill="#333"/></svg>
<svg class="a" style="left:893px;top:750px" width="12" height="10"><g fill="#9a9a9a"><rect x="8" y="1" width="1" height="1"/><rect x="6" y="3" width="1" height="1"/><rect x="8" y="3" width="1" height="1"/><rect x="4" y="5" width="1" height="1"/><rect x="6" y="5" width="1" height="1"/><rect x="8" y="5" width="1" height="1"/></g></svg>
<div class="a" style="left:1px;top:769px;width:911px;height:1px;background:#0a1a2a"></div>
<div class="a" style="left:15px;top:764px;width:22px;height:22px;border:1.5px solid #1c3a58;border-radius:50%;background:#c4d8ea;overflow:hidden"></div>

</body></html>
